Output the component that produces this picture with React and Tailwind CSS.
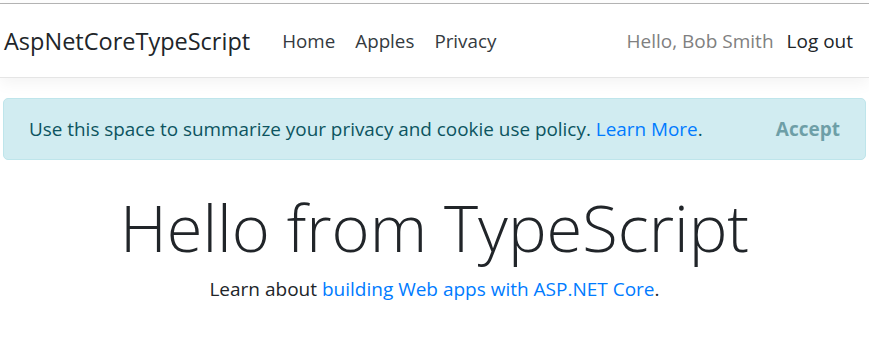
export default function App() {
  const font = { fontFamily: '"Segoe UI", "Open Sans", "Noto Sans", sans-serif' };
  return (
    <div className="min-h-screen bg-white text-[#212529]" style={font}>
      <div className="pt-[3px]">
        <nav className="flex h-[75px] items-center border-t border-b border-t-[#b3b3b3] border-b-[#e5e5e5] bg-white pt-[2px] pl-1 pr-4 shadow-[0_5px_15px_rgba(0,0,0,0.05)]">
          <a className="mr-[32px] text-[23.5px] text-[#212529]">AspNetCoreTypeScript</a>
          <ul className="flex flex-1 items-center gap-[20px] text-[18.8px] text-[#343a40]">
            <li>Home</li>
            <li>Apples</li>
            <li>Privacy</li>
          </ul>
          <ul className="flex items-center gap-[13px] text-[19px]">
            <li className="text-[#808080]">Hello, Bob Smith</li>
            <li className="text-[#212529]">Log out</li>
          </ul>
        </nav>
      </div>

      <div className="mx-[3px] mt-5 flex h-[62px] items-center justify-between rounded-[5px] border border-[#bee5eb] bg-[#d1ecf1] pl-[25px] pr-[25px] text-[18.9px] text-[#0c5460]">
        <span>
          Use this space to summarize your privacy and cookie use policy.{' '}
          <a className="text-[#007bff]">Learn More</a>.
        </span>
        <button className="text-[19px] font-bold text-[#0c5460] opacity-50">Accept</button>
      </div>

      <main className="pt-[28px] text-center">
        <h1 className="text-[65px] font-light leading-[1.2]">Hello from TypeScript</h1>
        <p className="mt-[9px] text-[19px] leading-[1.5]">
          Learn about <a className="text-[#007bff]">building Web apps with ASP.NET Core</a>.
        </p>
      </main>
    </div>
  );
}
